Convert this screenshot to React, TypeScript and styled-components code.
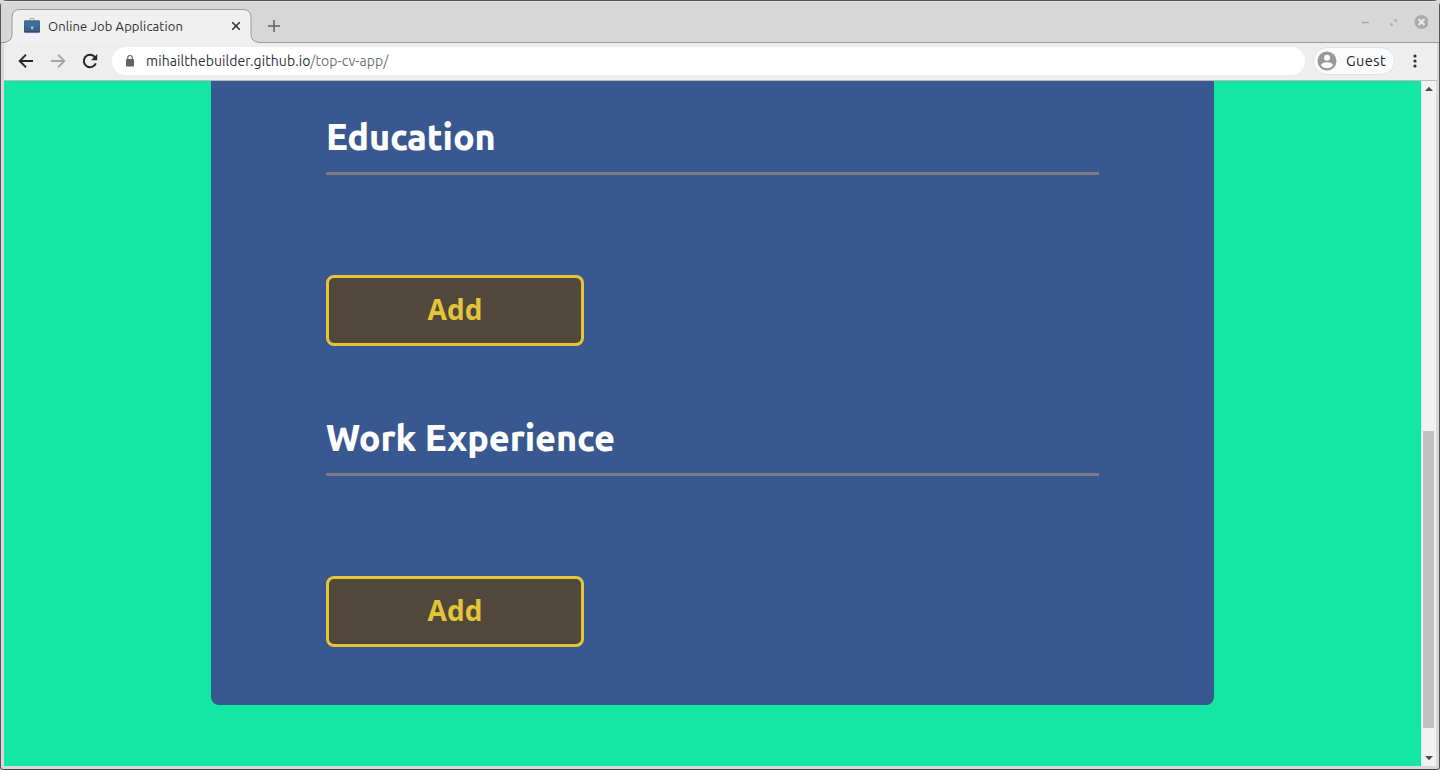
import React from "react";
import styled, { createGlobalStyle } from "styled-components";

const Global = createGlobalStyle`
  * { box-sizing: border-box; }
  body { margin: 0; background: #dad8dc; overflow: hidden; }
  body, button { font-family: Ubuntu, "Noto Sans", sans-serif; }
`;

const Window = styled.div`
  display: flex;
  flex-direction: column;
  width: 1440px;
  height: 770px;
  border: 1px solid #555356;
  border-bottom-color: #454347;
  border-radius: 6px 6px 3px 3px;
  background: #d8d8d8;
  padding: 0 3px 3px;
`;

const TabStrip = styled.div`
  display: flex;
  align-items: flex-end;
  height: 42px;
  margin: 0 -3px;
  padding: 0 3px;
  flex: none;
  background: linear-gradient(#e6e6e6 0 1px, #d7d7d7 1px 41px, #9c9c9c 41px);
`;

const Tab = styled.div`
  position: relative;
  display: flex;
  align-items: center;
  width: 240px;
  height: 34px;
  margin-left: 8px;
  padding: 0 9px 0 12px;
`;

const TabShape = styled.svg`
  position: absolute;
  left: -9px;
  top: 0;
`;

const TabIcon = styled.svg`
  position: relative;
  flex: none;
`;

const TabTitle = styled.span`
  position: relative;
  flex: 1;
  margin-left: 8px;
  font-size: 13px;
  line-height: 20px;
  letter-spacing: 0.12px;
  white-space: nowrap;
  color: #303134;
`;

const NewTab = styled.svg`
  margin: 0 0 10px 15px;
`;

const WindowControls = styled.div`
  display: flex;
  align-items: center;
  margin: 0 8px 13px auto;
`;

const Toolbar = styled.div`
  display: flex;
  align-items: center;
  height: 38px;
  flex: none;
  margin-right: -1px;
  padding: 0 12px 3px 12px;
  background: linear-gradient(#eeeeee 0 37px, #b9bcbb 37px);
`;

const NavIcon = styled.svg`
  flex: none;
  margin-right: 12px;
`;

const AddressBar = styled.div`
  display: flex;
  align-items: center;
  width: 1193px;
  height: 28px;
  padding-left: 13px;
  border-radius: 14px;
  background: #fff;
`;

const Url = styled.span`
  margin-left: 11px;
  font-size: 14px;
  line-height: 20px;
  letter-spacing: 0.08px;
  color: #303134;
`;

const UrlPath = styled.span`
  color: #717377;
`;

const Profile = styled.div`
  display: flex;
  align-items: center;
  width: 82px;
  height: 28px;
  margin: 0 17.5px 0 8px;
  padding-left: 3px;
  border: 1px solid #e2e2e2;
  border-radius: 14px;
  background: #fbfbfb;
`;

const ProfileName = styled.span`
  margin-left: 9px;
  font-size: 14.5px;
  line-height: 20px;
  letter-spacing: 0.45px;
  color: #242528;
`;

const Viewport = styled.div`
  display: flex;
  flex: 1;
  min-height: 0;
  background: #14e6a4;
`;

const Page = styled.main`
  flex: 1;
  padding-left: 207px;
`;

const Card = styled.div`
  width: 1003px;
  height: 624px;
  padding: 34px 115px 0;
  border-radius: 0 0 8px 8px;
  background: #39588f;
`;

const Section = styled.section`
  height: 301px;
`;

const Heading = styled.h2`
  height: 60px;
  margin: 0 0 100px;
  border-bottom: 3px solid #7c7b83;
  font-size: 36px;
  line-height: 44px;
  font-weight: 800;
  letter-spacing: -0.12px;
  color: #fff;
`;

const AddButton = styled.button`
  display: block;
  width: 258px;
  height: 71px;
  padding: 0 0 4px;
  border: 3px solid #e3c53a;
  border-radius: 8px;
  background: #51473b;
  font-family: "Open Sans", "Noto Sans", sans-serif;
  font-size: 28px;
  line-height: 40px;
  font-weight: 700;
  color: #e3c53a;
`;

const Scrollbar = styled.div`
  display: flex;
  flex-direction: column;
  align-items: center;
  width: 15px;
  padding-right: 1px;
  background: #f2f2f2;
  border-left: 1px solid #dff8f2;
`;

const ScrollArrow = styled.svg`
  flex: none;
`;

const ScrollTrack = styled.div`
  flex: 1;
  padding-top: 334px;
`;

const ScrollThumb = styled.div`
  width: 11px;
  height: 297px;
  background: #c1c1c1;
`;

const sections = ["Education", "Work Experience"];

export default function App() {
  return (
    <>
      <Global />
      <Window>
        <TabStrip>
          <Tab>
            <TabShape width="258" height="34" viewBox="0 0 258 34">
              <path
                d="M0 33.500h1q8-1 8-8V8.500q0-8 8-8H240q8 0 8 8v17q0 7 8 8h1V34H0z"
                fill="#f0f0f0"
              />
              <path
                d="M0 33.500h1q8-1 8-8V8.500q0-8 8-8H240q8 0 8 8v17q0 7 8 8h1"
                fill="none"
                stroke="#999"
              />
            </TabShape>
            <TabIcon width="16" height="16" viewBox="0 0 16 16">
              <path d="M5.500 3V1.500L6.500.5h3l1 1V3" fill="none" stroke="#b58f55" />
              <rect y="2.500" width="16" height="12" rx="1" fill="#3c5f8d" />
              <path d="M0 3.500q0-1 1-1h14q1 0 1 1V8q-8 3-16 0z" fill="#42699a" />
              <path d="M0 13h16v.5q0 1-1 1H1q-1 0-1-1z" fill="#34496a" />
              <path d="M7 8.500h2.300v1.800L8.200 11.500 7 10.300z" fill="#6be5c8" />
            </TabIcon>
            <TabTitle>Online Job Application</TabTitle>
            <TabIcon width="14" height="14" viewBox="0 0 14 14">
              <path d="m3.200 3.200 7.600 7.600m0-7.600-7.600 7.600" stroke="#303134" strokeWidth="1.600" />
            </TabIcon>
          </Tab>
          <NewTab width="14" height="14" viewBox="0 0 14 14">
            <path d="M7 1v12M1 7h12" stroke="#626262" strokeWidth="1.500" />
          </NewTab>
          <WindowControls>
            <svg width="70" height="16" viewBox="0 0 70 16">
              <path d="M4 8.500h7" stroke="#a5a5a5" strokeWidth="1.500" />
              <path d="M35 5h4v4zM32 8v4h4z" fill="#b3b3b3" />
              <circle cx="63.500" cy="8" r="7" fill="#aaa" />
              <path d="m60.500 5 6 6m0-6-6 6" stroke="#ececec" strokeWidth="2" />
            </svg>
          </WindowControls>
        </TabStrip>

        <Toolbar>
          <NavIcon width="20" height="20" viewBox="0 0 20 20">
            <path d="M17 10H4m6-6.300L3.700 10l6.300 6.300" fill="none" stroke="#242528" strokeWidth="1.900" />
          </NavIcon>
          <NavIcon width="20" height="20" viewBox="0 0 20 20">
            <path d="M3 10h13m-6-6.300 6.300 6.300-6.300 6.300" fill="none" stroke="#a5a5a5" strokeWidth="1.900" />
          </NavIcon>
          <NavIcon width="20" height="20" viewBox="0 0 20 20">
            <path d="M15.800 12.300A6.200 6.200 0 1 1 14.500 5.700L16 7.200" fill="none" stroke="#242528" strokeWidth="2" />
            <path d="M17.200 3v6.200H11z" fill="#242528" />
          </NavIcon>
          <AddressBar>
            <svg width="10" height="14" viewBox="0 0 10 14">
              <rect x="1" y="5" width="8" height="7.500" rx="1" fill="#626366" />
              <path d="M2.700 5.500V3.800a2.300 2.300 0 0 1 4.600 0v1.700" fill="none" stroke="#626366" strokeWidth="1.200" />
            </svg>
            <Url>
              mihailthebuilder.github.io<UrlPath>/top-cv-app/</UrlPath>
            </Url>
          </AddressBar>
          <Profile>
            <svg width="20" height="20" viewBox="0 0 20 20">
              <circle cx="10" cy="10" r="9.500" fill="#999" />
              <circle cx="10" cy="6.700" r="3" fill="#fff" />
              <path d="M4 14.300c.6-4.200 11.400-4.200 12 0-3 3.900-9 3.900-12 0z" fill="#fff" />
            </svg>
            <ProfileName>Guest</ProfileName>
          </Profile>
          <svg width="4" height="16" viewBox="0 0 4 16">
            <circle cx="2" cy="3" r="1.600" fill="#303030" />
            <circle cx="2" cy="8" r="1.600" fill="#303030" />
            <circle cx="2" cy="13" r="1.600" fill="#303030" />
          </svg>
        </Toolbar>

        <Viewport>
          <Page>
            <Card>
              {sections.map((title) => (
                <Section key={title}>
                  <Heading>{title}</Heading>
                  <AddButton>Add</AddButton>
                </Section>
              ))}
            </Card>
          </Page>
          <Scrollbar>
            <ScrollArrow width="14" height="16" viewBox="0 0 14 16">
              <path d="M3 10h8L7 5.800z" fill="#505050" />
            </ScrollArrow>
            <ScrollTrack>
              <ScrollThumb />
            </ScrollTrack>
            <ScrollArrow width="14" height="16" viewBox="0 0 14 16">
              <path d="M3 6h8l-4 4.200z" fill="#505050" />
            </ScrollArrow>
          </Scrollbar>
        </Viewport>
      </Window>
    </>
  );
}
